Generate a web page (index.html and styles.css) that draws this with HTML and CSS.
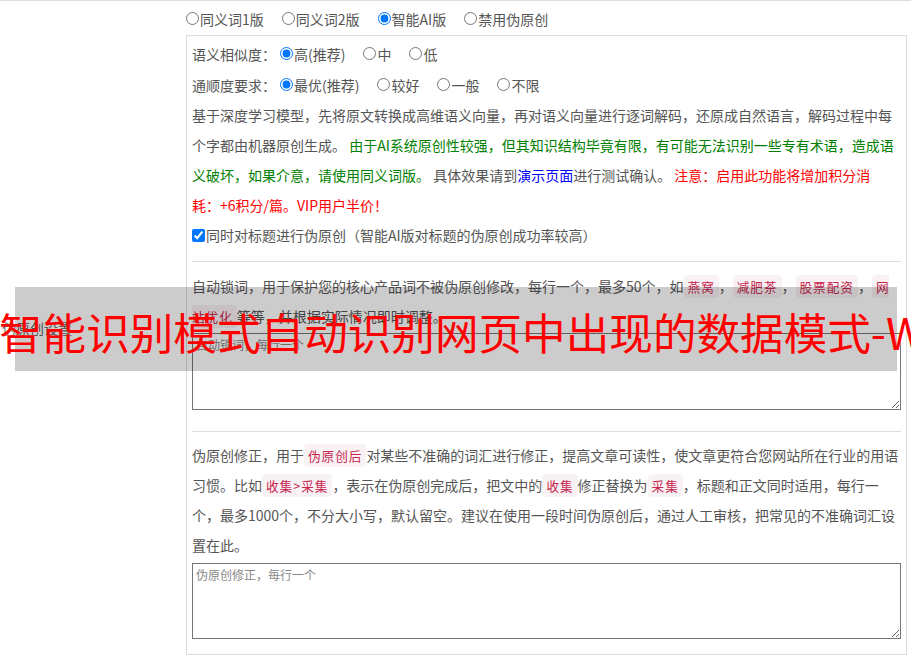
FILE: index.html
```html
<!DOCTYPE html>
<html lang="zh-CN">
<head>
<meta charset="utf-8">
<title>伪原创设置</title>
<link rel="stylesheet" href="styles.css">
</head>
<body>
<div class="page">
  <div class="side">伪原创设置</div>
  <div class="main">
    <div class="modes">
      <label class="opt"><input type="radio" name="mode">同义词1版</label>
      <label class="opt"><input type="radio" name="mode">同义词2版</label>
      <label class="opt"><input type="radio" name="mode" checked>智能AI版</label>
      <label class="opt"><input type="radio" name="mode">禁用伪原创</label>
    </div>
    <div class="box">
      <div class="sec first">
        <div class="row">
          <span class="rlabel">语义相似度：</span>
          <label class="opt"><input type="radio" name="sim" checked>高(推荐)</label>
          <label class="opt"><input type="radio" name="sim">中</label>
          <label class="opt"><input type="radio" name="sim">低</label>
        </div>
        <div class="row">
          <span class="rlabel">通顺度要求：</span>
          <label class="opt"><input type="radio" name="flu" checked>最优(推荐)</label>
          <label class="opt"><input type="radio" name="flu">较好</label>
          <label class="opt"><input type="radio" name="flu">一般</label>
          <label class="opt"><input type="radio" name="flu">不限</label>
        </div>
        <p class="desc">基于深度学习模型，先将原文转换成高维语义向量，再对语义向量进行逐词解码，还原成自然语言，解码过程中每个字都由机器原创生成。 <span class="green">由于AI系统原创性较强，但其知识结构毕竟有限，有可能无法识别一些专有术语，造成语义破坏，如果介意，请使用同义词版。</span> 具体效果请到<a class="link" href="#">演示页面</a>进行测试确认。 <span class="red">注意：启用此功能将增加积分消耗：+6积分/篇。VIP用户半价！</span></p>
        <label class="check"><input type="checkbox" checked>同时对标题进行伪原创（智能AI版对标题的伪原创成功率较高）</label>
      </div>
      <div class="sec second">
        <p class="desc">自动锁词，用于保护您的核心产品词不被伪原创修改，每行一个，最多50个，如<code class="kw">燕窝</code>，<code class="kw">减肥茶</code>，<code class="kw">股票配资</code>，<code class="kw">网站优化</code>等等，并根据实际情况即时调整。</p>
        <textarea class="area" placeholder="自动锁词，每行一个"></textarea>
      </div>
      <div class="sec third">
        <p class="desc">伪原创修正，用于<code class="kw">伪原创后</code>对某些不准确的词汇进行修正，提高文章可读性，使文章更符合您网站所在行业的用语习惯。比如<code class="kw">收集&gt;采集</code>，表示在伪原创完成后，把文中的<code class="kw">收集</code>修正替换为<code class="kw">采集</code>，标题和正文同时适用，每行一个，最多1000个，不分大小写，默认留空。建议在使用一段时间伪原创后，通过人工审核，把常见的不准确词汇设置在此。</p>
        <textarea class="area" placeholder="伪原创修正，每行一个"></textarea>
      </div>
    </div>
  </div>
</div>
<div class="overlay"><span class="overlay-text">智能识别模式自动识别网页中出现的数据模式-WebHarvy</span></div>
</body>
</html>
```

FILE: styles.css
```css
html, body {
  margin: 0;
  padding: 0;
  overflow: hidden;
  background: #fff;
}
body {
  font-family: "Noto Sans CJK SC", "Microsoft YaHei", sans-serif;
  font-size: 14px;
  color: #555;
  position: relative;
  width: 911px;
  height: 658px;
}
.page {
  display: grid;
  grid-template-columns: 186px 721px;
  border-top: 1px solid #ddd;
}
.side {
  align-self: center;
  padding-left: 2px;
  color: #666;
  line-height: 20px;
}
.main {
  display: flex;
  flex-direction: column;
}
.modes {
  height: 34px;
  display: flex;
  align-items: center;
  padding-top: 1px;
  box-sizing: border-box;
}
.opt {
  display: inline-flex;
  align-items: center;
  margin-right: 18px;
  white-space: nowrap;
}
.opt input {
  margin: 0 1px 0 0;
  width: 13px;
  height: 13px;
}
.box {
  border: 1px solid #ddd;
  padding: 2px 5px 15px 5px;
}
.row {
  height: 31px;
  display: flex;
  align-items: center;
}
.rlabel {
  margin-right: 4px;
}
.desc {
  margin: 0;
  line-height: 30px;
}
.first .desc {
  margin-right: 4px;
}
.green { color: #008000; }
.red { color: #ff0000; }
.link { color: #0000ff; text-decoration: none; }
.check {
  display: flex;
  align-items: center;
  height: 30px;
}
.check input {
  margin: 0 1px 0 0;
  width: 13px;
  height: 13px;
}
.first {
  margin-bottom: 11px;
}
.second, .third {
  border-top: 1px solid #ddd;
}
.second {
  padding-top: 9px;
  padding-bottom: 21px;
}
.third {
  padding-top: 8px;
}
.kw {
  font-family: "Noto Sans CJK SC", sans-serif;
  font-size: 12.6px;
  line-height: 1;
  letter-spacing: 1px;
  color: #c7254e;
  background: #f9f2f4;
  border-radius: 4px;
  padding: 2px 4px;
}
.area {
  display: block;
  box-sizing: border-box;
  width: 709px;
  padding: 2px 3px;
  border: 1px solid #767676;
  font-family: "Noto Sans CJK SC", sans-serif;
  font-size: 12px;
  line-height: 18px;
  color: #555;
}
.second .area { height: 77px; margin: 2px 0 0 0; }
.third .area { height: 76px; margin: 3px 0 0 0; }
.area::placeholder { color: #888; }
.overlay {
  position: absolute;
  left: 15px;
  top: 287px;
  width: 882px;
  height: 84px;
  background: rgba(0, 0, 0, 0.2);
}
.overlay-text {
  position: absolute;
  left: -16px;
  top: 2px;
  line-height: 84px;
  white-space: nowrap;
  font-family: "Noto Sans CJK SC", sans-serif;
  font-size: 43.6px;
  color: #ff0000;
}
```
